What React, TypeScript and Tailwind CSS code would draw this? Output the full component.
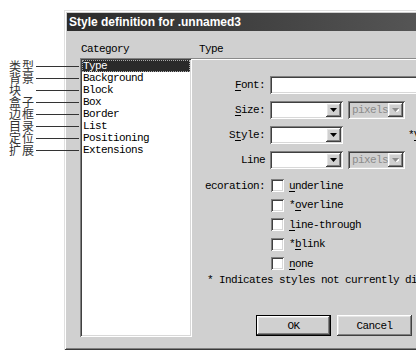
import React from 'react';

const raised = 'shadow-[inset_-1px_-1px_0_#404040,inset_1px_1px_0_#ffffff,inset_-2px_-2px_0_#808080,inset_2px_2px_0_#e4e4e4]';
const sunken = 'shadow-[inset_1px_1px_0_#808080,inset_-1px_-1px_0_#ffffff,inset_2px_2px_0_#404040,inset_-2px_-2px_0_#d8d8d8]';

const notes = ['类型', '背景', '块', '盒子', '边框', '目录', '定位', '扩展'];
const categories = ['Type', 'Background', 'Block', 'Box', 'Border', 'List', 'Positioning', 'Extensions'];

function Arrow({ disabled }: { disabled?: boolean }) {
  return (
    <div className={`flex h-[14px] w-[15px] items-center justify-center bg-[#d0d0d0] ${raised}`}>
      <svg width="7" height="4" viewBox="0 0 7 4">
        {disabled && <path d="M1 1h7L4.5 5z" fill="#ffffff" />}
        <path d="M0 0h7L3.5 4z" fill={disabled ? '#8c8c8c' : '#000000'} />
      </svg>
    </div>
  );
}

function Select({ width, text, disabled }: { width: number; text?: string; disabled?: boolean }) {
  return (
    <div
      className={`flex h-[18px] items-center justify-between pl-[4px] pr-[2px] ${sunken} ${disabled ? 'bg-[#d0d0d0] text-[#8c8c8c]' : 'bg-white'}`}
      style={{ width }}
    >
      <span>{text}</span>
      <Arrow disabled={disabled} />
    </div>
  );
}

function Label({ children }: { children: React.ReactNode }) {
  return <div className="w-[74px] shrink-0 pr-[1px] text-right whitespace-nowrap">{children}</div>;
}

function U({ children }: { children: React.ReactNode }) {
  return <span className="underline underline-offset-2">{children}</span>;
}

function Check({ children }: { children: React.ReactNode }) {
  return (
    <div className="flex h-[13px] items-center">
      <div className={`h-[13px] w-[13px] bg-white ${sunken}`} />
      <span className="ml-[5px]">{children}</span>
    </div>
  );
}

function Button({ label, isDefault }: { label: string; isDefault?: boolean }) {
  return (
    <div className={`h-[21px] w-[75px] ${isDefault ? 'border border-black' : ''}`}>
      <div className={`flex h-full w-full items-center justify-center bg-[#d0d0d0] ${raised}`}>{label}</div>
    </div>
  );
}

export default function App() {
  return (
    <div className="relative h-[360px] w-[416px] overflow-hidden bg-white pl-[64px] pt-[10px] font-['Liberation_Mono',monospace] text-[11px] leading-[12px] tracking-[-0.6px] text-black">
      <div className="h-[340px] w-[380px] bg-[#d0d0d0] p-[3px] shadow-[inset_1px_1px_0_#e0e0e0,inset_-1px_-1px_0_#3a3a3a,inset_2px_2px_0_#ffffff,inset_-2px_-2px_0_#808080]">
        <div className="flex h-[18px] items-center bg-gradient-to-r from-[#2c2c2c] to-[#585858] pl-[2px] font-['Liberation_Sans',sans-serif] text-[12px] font-bold tracking-normal text-white">
          Style definition for .unnamed3
        </div>
        <div className="flex pl-[13px] pt-[12px]">
          <div className="w-[112px] shrink-0">
            <div className="pl-[1px]">Category</div>
            <div className={`mt-[3px] h-[279px] bg-white p-[2px] ${sunken}`}>
              {categories.map((c, i) => (
                <div
                  key={c}
                  className={`h-[12px] pl-[1px] ${i === 0 ? 'bg-[#2a2a2a] text-white outline outline-1 outline-dotted outline-[#aaaaaa] -outline-offset-1' : ''}`}
                >
                  {c}
                </div>
              ))}
            </div>
          </div>
          <div className="flex-1">
            <div className="pl-[7px]">Type</div>
            <div className="mt-[3px] h-[2px] border-t border-[#8a8a8a] border-b border-b-white" />
            <div className="mt-[16px] flex flex-col gap-[7px]">
              <div className="flex items-center">
                <Label>
                  <U>F</U>ont:
                </Label>
                <div className={`ml-[4px] h-[18px] w-[200px] bg-white ${sunken}`} />
              </div>
              <div className="flex items-center">
                <Label>
                  <U>S</U>ize:
                </Label>
                <div className="ml-[4px]">
                  <Select width={73} />
                </div>
                <div className="ml-[5px]">
                  <Select width={57} text="pixels" disabled />
                </div>
              </div>
              <div className="flex items-center">
                <Label>
                  S<U>t</U>yle:
                </Label>
                <div className="ml-[4px]">
                  <Select width={73} />
                </div>
                <div className="ml-[65px]">
                  *<U>V</U>ariant:
                </div>
              </div>
              <div className="flex items-center">
                <Label>Line</Label>
                <div className="ml-[4px]">
                  <Select width={73} />
                </div>
                <div className="ml-[5px]">
                  <Select width={57} text="pixels" disabled />
                </div>
              </div>
            </div>
            <div className="mt-[10px] flex items-start">
              <div className="flex h-[13px] w-[74px] shrink-0 items-center justify-end overflow-hidden pr-[1px]">
                <span className="whitespace-nowrap">ecoration:</span>
              </div>
              <div className="ml-[5px] flex flex-col gap-[6.5px]">
                <Check>
                  <U>u</U>nderline
                </Check>
                <Check>
                  *<U>o</U>verline
                </Check>
                <Check>
                  <U>l</U>ine-through
                </Check>
                <Check>
                  *<U>b</U>link
                </Check>
                <Check>
                  <U>n</U>one
                </Check>
              </div>
            </div>
            <div className="mt-[4px] whitespace-nowrap pl-[15px]">* Indicates styles not currently displayed</div>
            <div className="mt-[29px] flex gap-[6px] pl-[64px]">
              <Button label="OK" isDefault />
              <Button label="Cancel" />
              <Button label="Help" />
            </div>
          </div>
        </div>
      </div>
      <div className="absolute left-[9px] top-[60px] flex flex-col font-['Noto_Sans_CJK_SC',sans-serif] text-[12px] tracking-[1px] text-[#333333]">
        {notes.map((n) => (
          <div key={n} className="flex h-[12px] items-center">
            <span className="w-[27px] leading-[12px]">{n}</span>
            <div className="h-px w-[43px] bg-[#333333]" />
          </div>
        ))}
      </div>
    </div>
  );
}
